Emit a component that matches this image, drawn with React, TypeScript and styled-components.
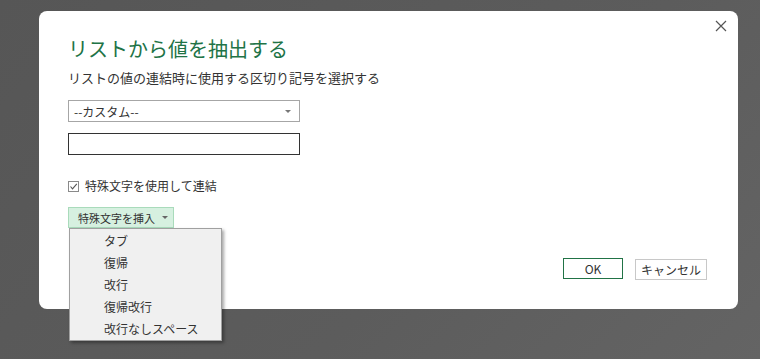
import styled, { createGlobalStyle } from 'styled-components';

const GlobalStyle = createGlobalStyle`
	html, body {
		margin: 0;
		padding: 0;
		height: 100%;
	}
	body {
		background: linear-gradient(135deg, #565656 0%, #5c5c5c 60%, #646464 100%);
		font-family: 'Noto Sans CJK JP', 'Noto Sans', sans-serif;
		overflow: hidden;
	}
`;

const Page = styled.div`
	width: 760px;
	height: 359px;
	padding: 11px 0 0 39px;
	box-sizing: border-box;
`;

const Dialog = styled.div`
	position: relative;
	width: 699px;
	height: 298px;
	background: #fff;
	border-radius: 8px;
	box-sizing: border-box;
	padding: 24px 31px 29px 29px;
	display: flex;
	flex-direction: column;
`;

const CloseButton = styled.button`
	position: absolute;
	top: 6px;
	right: 8px;
	width: 18px;
	height: 18px;
	padding: 0;
	border: none;
	background: none;
	display: flex;
	align-items: center;
	justify-content: center;
`;

const Title = styled.h1`
	margin: 0;
	font-size: 20px;
	font-weight: 400;
	line-height: 28px;
	color: #217346;
`;

const Subtitle = styled.p`
	margin: 6px 0 0;
	font-size: 13px;
	line-height: 18px;
	color: #333;
`;

const Select = styled.div`
	margin-top: 13px;
	width: 232px;
	height: 22px;
	box-sizing: border-box;
	border: 1px solid #a6a6a6;
	display: flex;
	align-items: center;
	justify-content: space-between;
	padding: 0 8px 0 5px;
	font-size: 12px;
	color: #333;
`;

const Caret = styled.span`
	width: 0;
	height: 0;
	border-left: 3px solid transparent;
	border-right: 3px solid transparent;
	border-top: 3px solid ${({ color }) => color || '#777'};
`;

const TextInput = styled.div`
	margin-top: 11px;
	width: 232px;
	height: 22px;
	box-sizing: border-box;
	border: 1px solid #333;
`;

const CheckRow = styled.label`
	margin-top: 22px;
	display: flex;
	align-items: center;
	gap: 6px;
	font-size: 12px;
	color: #333;
	line-height: 18px;
`;

const CheckBox = styled.span`
	width: 11px;
	height: 11px;
	box-sizing: border-box;
	border: 1px solid #8a8a8a;
	display: flex;
	align-items: center;
	justify-content: center;
`;

const InsertWrap = styled.div`
	position: relative;
	margin-top: 12px;
	align-self: flex-start;
`;

const InsertButton = styled.div`
	height: 21px;
	width: 106px;
	box-sizing: border-box;
	background: #d6f0e0;
	border: 1px solid #a9dbbb;
	display: flex;
	align-items: center;
	gap: 7px;
	padding-left: 9px;
	font-size: 11px;
	color: #333;
`;

const Menu = styled.ul`
	position: absolute;
	top: 21px;
	left: 1px;
	width: 153px;
	margin: 0;
	padding: 1px 0 0;
	list-style: none;
	box-sizing: border-box;
	height: 113px;
	background: #f0f0f0;
	border: 1px solid #a0a0a0;
	box-shadow: 2px 2px 3px rgba(0, 0, 0, 0.35);
	z-index: 2;
`;

const MenuItem = styled.li`
	height: 22px;
	line-height: 22px;
	padding-left: 34px;
	font-size: 12px;
	color: #333;
`;

const Footer = styled.div`
	margin-top: auto;
	display: flex;
	justify-content: flex-end;
	align-items: flex-end;
	gap: 12px;
`;

const Button = styled.button<{ primary?: boolean }>`
	height: 21px;
	box-sizing: border-box;
	background: #fff;
	border: 1px solid ${({ primary }) => (primary ? '#217346' : '#c8c8c8')};
	font-family: inherit;
	font-size: 12px;
	color: #333;
	padding: 0;
	width: ${({ primary }) => (primary ? '60px' : '72px')};
	margin-bottom: ${({ primary }) => (primary ? '1px' : '0')};
`;

const items = ['タブ', '復帰', '改行', '復帰改行', '改行なしスペース'];

const App = () => {
	return (
		<>
			<GlobalStyle />
			<Page>
				<Dialog>
					<CloseButton aria-label='close'>
						<svg width='12' height='12' viewBox='0 0 12 12'>
							<path d='M1 1 L11 11 M11 1 L1 11' stroke='#555' strokeWidth='1.2' />
						</svg>
					</CloseButton>
					<Title>リストから値を抽出する</Title>
					<Subtitle>リストの値の連結時に使用する区切り記号を選択する</Subtitle>
					<Select>
						<span>--カスタム--</span>
						<Caret />
					</Select>
					<TextInput />
					<CheckRow>
						<CheckBox>
							<svg width='9' height='9' viewBox='0 0 9 9'>
								<path d='M1.5 4.5 L3.5 6.8 L7.8 1.8' stroke='#555' strokeWidth='1.1' fill='none' />
							</svg>
						</CheckBox>
						特殊文字を使用して連結
					</CheckRow>
					<InsertWrap>
						<InsertButton>
							特殊文字を挿入
							<Caret color='#666' />
						</InsertButton>
						<Menu>
							{items.map((item) => (
								<MenuItem key={item}>{item}</MenuItem>
							))}
						</Menu>
					</InsertWrap>
					<Footer>
						<Button primary>OK</Button>
						<Button>キャンセル</Button>
					</Footer>
				</Dialog>
			</Page>
		</>
	);
};

export default App;
